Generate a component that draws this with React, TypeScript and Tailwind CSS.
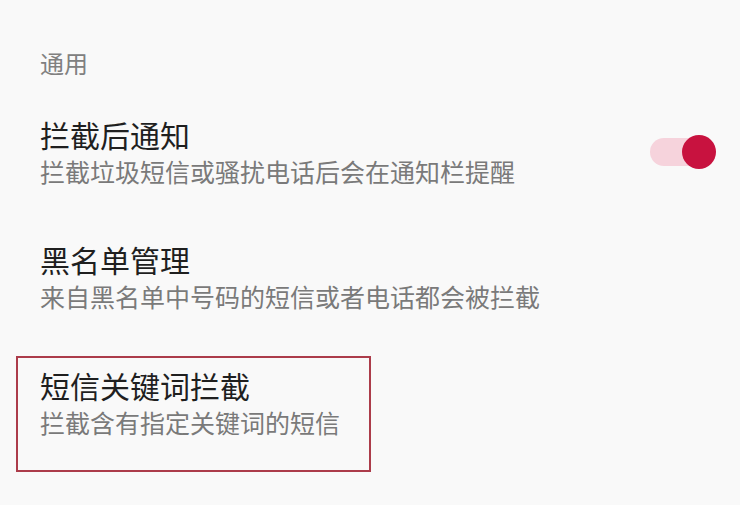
import React from 'react';

const font = { fontFamily: '"Noto Sans CJK SC", "Noto Sans", sans-serif' };

function Toggle() {
  return (
    <div className="flex items-center">
      <div className="w-[62px] h-[28px] rounded-full bg-[#f6d3dc]" />
      <div className="-ml-[30px] w-[34px] h-[34px] rounded-full bg-[#c8123f]" />
    </div>
  );
}

function ItemText({ title, desc }: { title: string; desc: string }) {
  return (
    <div>
      <div className="text-[30px] leading-[30px] text-[#1f1f1f]">{title}</div>
      <div className="mt-[10px] text-[25px] leading-[25px] text-[#7a7a7a]">{desc}</div>
    </div>
  );
}

export default function App() {
  return (
    <div className="w-[740px] h-[505px] bg-[#f9f9f9] overflow-hidden" style={font}>
      <div className="pl-[40px] pr-[24px] pt-[51px]">
        <div className="text-[24px] leading-[24px] text-[#808080]">通用</div>

        <div className="mt-[44px] flex items-center justify-between">
          <ItemText title="拦截后通知" desc="拦截垃圾短信或骚扰电话后会在通知栏提醒" />
          <Toggle />
        </div>

        <div className="mt-[60px]">
          <ItemText title="黑名单管理" desc="来自黑名单中号码的短信或者电话都会被拦截" />
        </div>

        <div className="mt-[47px] -ml-[24px] w-[355px] h-[116px] border-2 border-[#ac3c4a] pl-[22px] pt-[12px]">
          <ItemText title="短信关键词拦截" desc="拦截含有指定关键词的短信" />
        </div>
      </div>
    </div>
  );
}
